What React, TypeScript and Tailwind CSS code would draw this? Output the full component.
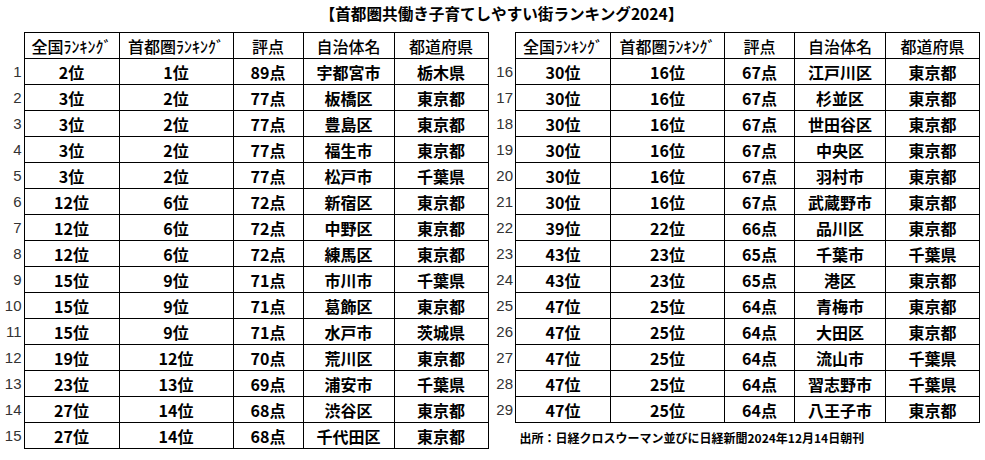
const left = [
  ["2位", "1位", "89点", "宇都宮市", "栃木県"],
  ["3位", "2位", "77点", "板橋区", "東京都"],
  ["3位", "2位", "77点", "豊島区", "東京都"],
  ["3位", "2位", "77点", "福生市", "東京都"],
  ["3位", "2位", "77点", "松戸市", "千葉県"],
  ["12位", "6位", "72点", "新宿区", "東京都"],
  ["12位", "6位", "72点", "中野区", "東京都"],
  ["12位", "6位", "72点", "練馬区", "東京都"],
  ["15位", "9位", "71点", "市川市", "千葉県"],
  ["15位", "9位", "71点", "葛飾区", "東京都"],
  ["15位", "9位", "71点", "水戸市", "茨城県"],
  ["19位", "12位", "70点", "荒川区", "東京都"],
  ["23位", "13位", "69点", "浦安市", "千葉県"],
  ["27位", "14位", "68点", "渋谷区", "東京都"],
  ["27位", "14位", "68点", "千代田区", "東京都"],
];

const right = [
  ["30位", "16位", "67点", "江戸川区", "東京都"],
  ["30位", "16位", "67点", "杉並区", "東京都"],
  ["30位", "16位", "67点", "世田谷区", "東京都"],
  ["30位", "16位", "67点", "中央区", "東京都"],
  ["30位", "16位", "67点", "羽村市", "東京都"],
  ["30位", "16位", "67点", "武蔵野市", "東京都"],
  ["39位", "22位", "66点", "品川区", "東京都"],
  ["43位", "23位", "65点", "千葉市", "千葉県"],
  ["43位", "23位", "65点", "港区", "東京都"],
  ["47位", "25位", "64点", "青梅市", "東京都"],
  ["47位", "25位", "64点", "大田区", "東京都"],
  ["47位", "25位", "64点", "流山市", "千葉県"],
  ["47位", "25位", "64点", "習志野市", "千葉県"],
  ["47位", "25位", "64点", "八王子市", "東京都"],
];

const headers = ["全国ﾗﾝｷﾝｸﾞ", "首都圏ﾗﾝｷﾝｸﾞ", "評点", "自治体名", "都道府県"];

function RankTable({ rows, start, numWidth }: { rows: string[][]; start: number; numWidth: string }) {
  return (
    <table className="table-fixed border-collapse">
      <colgroup>
        <col className={numWidth} />
        <col className="w-[95px]" />
        <col className="w-[114px]" />
        <col className="w-[70px]" />
        <col className="w-[91px]" />
        <col className="w-[94px]" />
      </colgroup>
      <thead>
        <tr className="h-[26px]">
          <th className="p-0" />
          {headers.map((h) => (
            <th key={h} className="border border-black p-0 text-[16px] font-medium leading-none text-black">
              {h}
            </th>
          ))}
        </tr>
      </thead>
      <tbody>
        {rows.map((r, i) => (
          <tr key={i} className="h-[26px]">
            <td className="p-0 pr-[2px] text-right font-['Liberation_Sans',sans-serif] text-[15px] leading-none text-[#333]">
              {start + i}
            </td>
            {r.map((c, j) => (
              <td key={j} className="border border-black p-0 text-center text-[16px] font-bold leading-none text-black">
                {c}
              </td>
            ))}
          </tr>
        ))}
      </tbody>
    </table>
  );
}

export default function App() {
  return (
    <div className="w-[985px] h-[460px] overflow-hidden bg-white font-['Noto_Sans_CJK_JP',sans-serif]">
      {/* title */}
      <div className="flex h-[32px] items-center justify-center pl-[18px] pb-[4px] text-[15.6px] font-bold text-black">
        【首都圏共働き子育てしやすい街ランキング2024】
      </div>
      <div className="flex items-start">
        <RankTable rows={left} start={1} numWidth="w-[24px]" />
        <div className="flex flex-col">
          <RankTable rows={right} start={16} numWidth="w-[27px]" />
          <div className="mt-[7px] pl-[31px] text-[12px] font-bold leading-[16px] text-black">
            出所：日経クロスウーマン並びに日経新聞2024年12月14日朝刊
          </div>
        </div>
      </div>
    </div>
  );
}
